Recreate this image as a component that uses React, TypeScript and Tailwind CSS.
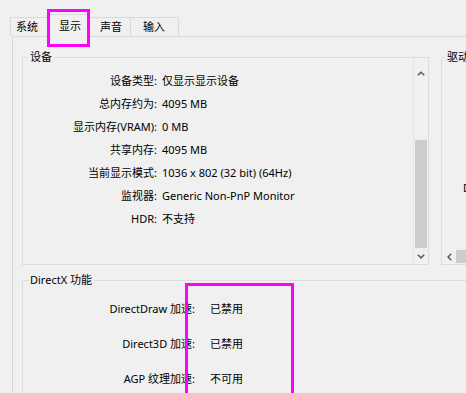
import React from "react";

const ChevUp = () => (
  <svg width="8" height="5" viewBox="0 0 8 5">
    <path d="M0.8 4.3 L4 1.2 L7.2 4.3" stroke="#5a5a5a" strokeWidth="1.5" fill="none" />
  </svg>
);
const ChevDown = () => (
  <svg width="8" height="5" viewBox="0 0 8 5">
    <path d="M0.8 0.8 L4 3.9 L7.2 0.8" stroke="#5a5a5a" strokeWidth="1.5" fill="none" />
  </svg>
);
const ChevLeft = () => (
  <svg width="5" height="8" viewBox="0 0 5 8">
    <path d="M4.2 0.8 L1.1 4 L4.2 7.2" stroke="#5a5a5a" strokeWidth="1.5" fill="none" />
  </svg>
);

const devRows: [string, string][] = [
  ["设备类型:", "仅显示显示设备"],
  ["总内存约为:", "4095 MB"],
  ["显示内存(VRAM):", "0 MB"],
  ["共享内存:", "4095 MB"],
  ["当前显示模式:", "1036 x 802 (32 bit) (64Hz)"],
  ["监视器:", "Generic Non-PnP Monitor"],
  ["HDR:", "不支持"],
];

const dxRows: [string, string][] = [
  ["DirectDraw 加速:", "已禁用"],
  ["Direct3D 加速:", "已禁用"],
  ["AGP 纹理加速:", "不可用"],
];

export default function App() {
  return (
    <div className="relative w-[466px] h-[393px] overflow-hidden bg-[#f0f0f0] text-[11px] text-black font-['Noto_Sans','Noto_Sans_CJK_SC',sans-serif]">
      {/* tab strip */}
      <div className="flex items-end h-[36px] pl-[10px]">
        <div className="h-[19px] w-[38px] pl-[5px] border-l border-t border-[#d9d9d9] flex items-center">系统</div>
        <div className="relative z-10 -mb-px h-[23px] w-[42px] pl-[10px] border-l border-t border-r border-[#d9d9d9] bg-[#f0f0f0] flex items-center">显示</div>
        <div className="h-[19px] w-[41px] pl-[10px] border-t border-r border-[#d9d9d9] flex items-center">声音</div>
        <div className="h-[19px] w-[48px] pl-[12px] border-t border-r border-[#d9d9d9] flex items-center">输入</div>
      </div>

      {/* tab panel */}
      <div className="ml-[12px] h-[357px] border-l border-t border-[#d9d9d9] pl-[9px] pt-[20px]">
        <div className="flex">
          {/* 设备 group */}
          <div className="relative shrink-0 w-[407px] h-[208px] border border-[#dcdcdc] flex">
            <span className="absolute left-[5px] -top-[9px] px-[2px] bg-[#f0f0f0] leading-[16px]">设备</span>
            <div className="flex-1 pt-[12px]">
              {devRows.map(([k, v]) => (
                <div key={k} className="flex h-[23px] items-center">
                  <div className="w-[134px] text-right">{k}</div>
                  <div className="pl-[5px] whitespace-nowrap">{v}</div>
                </div>
              ))}
            </div>
            <div className="w-[15px] border-l border-[#e6e6e6] flex flex-col">
              <div className="h-[22px] pt-[8px] flex items-center justify-center">
                <ChevUp />
              </div>
              <div className="h-[60px]" />
              <div className="h-[108px] mx-px bg-[#cdcdcd]" />
              <div className="h-[16px] flex items-center justify-center">
                <ChevDown />
              </div>
            </div>
          </div>

          {/* 驱动 group */}
          <div className="relative shrink-0 ml-[12px] w-[40px] h-[208px] border-l border-t border-b border-[#dcdcdc] flex flex-col">
            <span className="absolute left-[3px] -top-[9px] px-[2px] bg-[#f0f0f0] leading-[16px] whitespace-nowrap">驱动</span>
            <div className="flex-1 pt-[122px] pl-[21px] leading-[16px]">D</div>
            <div className="h-[15px] flex">
              <div className="w-[14px] flex items-center justify-center">
                <ChevLeft />
              </div>
              <div className="flex-1 my-px bg-[#cdcdcd]" />
            </div>
          </div>
        </div>

        {/* DirectX 功能 group */}
        <div className="relative mt-[15px] w-[460px] h-[120px] border-l border-t border-[#dcdcdc] pt-[11px]">
          <span className="absolute left-[5px] -top-[9px] px-[2px] bg-[#f0f0f0] leading-[16px]">DirectX 功能</span>
          {dxRows.map(([k, v]) => (
            <div key={k} className="flex h-[35px] items-center">
              <div className="w-[172px] text-right whitespace-nowrap">{k}</div>
              <div className="pl-[15px]">{v}</div>
            </div>
          ))}
        </div>
      </div>

      {/* magenta highlight boxes */}
      <div className="absolute left-[47px] top-[9px] w-[43px] h-[38px] border-[3px] border-[#ff00ff] z-20" />
      <div className="absolute left-[185px] top-[283px] w-[109px] h-[130px] border-[3px] border-[#ff00ff] z-20" />
    </div>
  );
}
